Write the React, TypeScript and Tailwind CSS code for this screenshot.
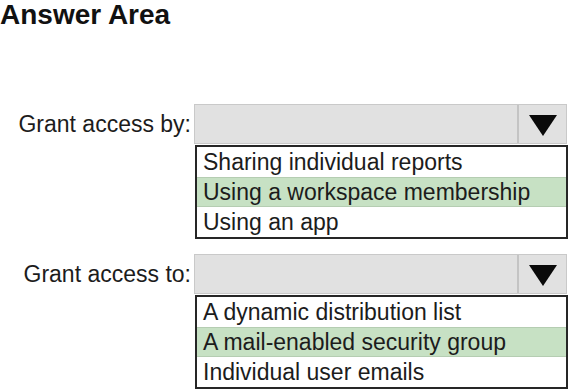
type Field = {
  label: string
  options: string[]
  selected: number
}

const fields: Field[] = [
  {
    label: 'Grant access by:',
    options: ['Sharing individual reports', 'Using a workspace membership', 'Using an app'],
    selected: 1,
  },
  {
    label: 'Grant access to:',
    options: ['A dynamic distribution list', 'A mail-enabled security group', 'Individual user emails'],
    selected: 1,
  },
]

function Dropdown({ field }: { field: Field }) {
  return (
    <div className="flex flex-col">
      <div className="flex items-center">
        <div className="w-[192px] pr-[1px] text-right text-[23px] leading-[26px] text-[#1c1c1c]">
          {field.label}
        </div>
        <div className="ml-[2px] flex h-[40px] w-[373px] border border-[#c9c9c9] bg-[#e1e1e1]">
          <div className="flex-1" />
          <div className="flex w-[49px] items-center justify-center border-l-2 border-[#c4c4c4]">
            <svg width="28" height="21" viewBox="0 0 28 21" className="mt-[2px]">
              <polygon points="0,0 28,0 14,21" fill="#0a0a0a" />
            </svg>
          </div>
        </div>
      </div>
      <div className="ml-[195px] mt-[1px] flex w-[373px] flex-col border-2 border-[#262626] bg-white">
        {field.options.map((option, index) => (
          <div
            key={option}
            className={`flex h-[30px] items-center pl-[6px] text-[23px] leading-[26px] text-[#1c1c1c] ${
              index === field.selected ? 'border-y border-[#b5cdb2] bg-[#c7e1c4]' : ''
            }`}
          >
            {option}
          </div>
        ))}
      </div>
    </div>
  )
}

export default function App() {
  return (
    <div className="h-[389px] w-[569px] overflow-hidden bg-white font-['Liberation_Sans',Arial,sans-serif]">
      <h1 className="text-[28px] font-bold leading-[30px] text-[#111]">Answer Area</h1>
      <div className="mt-[74px] flex flex-col gap-[15px]">
        {fields.map((field) => (
          <Dropdown key={field.label} field={field} />
        ))}
      </div>
    </div>
  )
}
